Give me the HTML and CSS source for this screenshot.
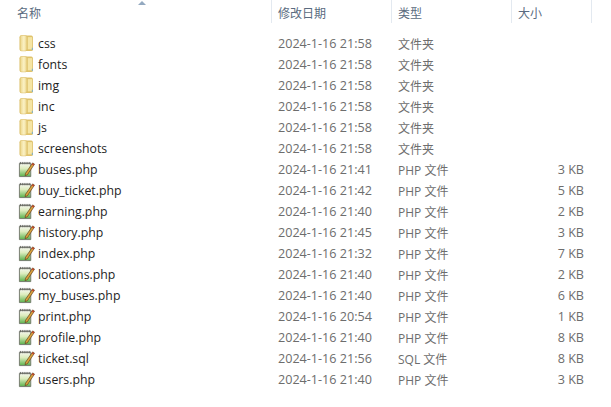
FILE: index.html
```html
<!DOCTYPE html>
<html lang="zh-CN">
<head>
  <meta charset="UTF-8" />
  <title>ticket</title>
  <link rel="stylesheet" href="styles.css">
</head>
<body>
  <svg class="defs" width="0" height="0">
    <defs>
      <linearGradient id="folderFill" x1="0" y1="0" x2="1" y2="0">
        <stop offset="0" stop-color="#ecd68a" />
        <stop offset="0.55" stop-color="#fbf2c6" />
        <stop offset="1" stop-color="#e8cf7e" />
      </linearGradient>
      <linearGradient id="pageFill" x1="0" y1="0" x2="0" y2="1">
        <stop offset="0" stop-color="#f6f7f0" />
        <stop offset="0.4" stop-color="#dcecbc" />
        <stop offset="1" stop-color="#58b04a" />
      </linearGradient>
      <symbol id="folder" viewBox="0 0 16 16">
        <path d="M3 0.500h9.500q1.500 0 1.500 1.500v12q0 1-1.500 1H3q-1.500 0-1.500-1.500V2q0-1.500 1.500-1.500z" fill="#dfc26a" />
        <path d="M2 1.500q0-1 1-1h4q1.500 0 1.500 1.500v11q0 2-1.500 2H3.500q-1.500 0-1.500-1.500z" fill="url(#folderFill)" stroke="#dcbf6c" stroke-width="0.5" />
        <path d="M9.200 2h4v11.500h-4z" fill="#f5e5a4" />
        <path d="M13 12h1v2h-1z" fill="#7fb0c8" />
      </symbol>
      <symbol id="script" viewBox="0 0 18 18">
        <path d="M1.500 2.500h12v14h-12z" fill="url(#pageFill)" stroke="#73786c" stroke-width="1" />
        <path d="M2.500 1v2.500M4.500 1v2.500M6.500 1v2.500M8.500 1v2.500M10.500 1v2.500M12.500 1v2.500" stroke="#5d5f58" stroke-width="1" />
        <path d="M8 13l7.500-11 2 1.300L10 14.500 7.500 15.500z" fill="#d9a23c" stroke="#5e3a1c" stroke-width="0.7" />
        <path d="M15.300 2.300l2 1.300-.8 1.200-2-1.300z" fill="#c23b2a" />
      </symbol>
    </defs>
  </svg>

  <div class="list-head">
    <div class="col col-name">名称<span class="sort-arrow"></span></div>
    <div class="col col-date">修改日期</div>
    <div class="col col-type">类型</div>
    <div class="col col-size">大小</div>
    <div class="col col-rest"></div>
  </div>

  <div class="file-list">
    <div class="file-row"><div class="file-name"><svg class="ico"><use href="#folder" /></svg>css</div><div class="file-date">2024-1-16 21:58</div><div class="file-type">文件夹</div><div class="file-size"></div></div>
    <div class="file-row"><div class="file-name"><svg class="ico"><use href="#folder" /></svg>fonts</div><div class="file-date">2024-1-16 21:58</div><div class="file-type">文件夹</div><div class="file-size"></div></div>
    <div class="file-row"><div class="file-name"><svg class="ico"><use href="#folder" /></svg>img</div><div class="file-date">2024-1-16 21:58</div><div class="file-type">文件夹</div><div class="file-size"></div></div>
    <div class="file-row"><div class="file-name"><svg class="ico"><use href="#folder" /></svg>inc</div><div class="file-date">2024-1-16 21:58</div><div class="file-type">文件夹</div><div class="file-size"></div></div>
    <div class="file-row"><div class="file-name"><svg class="ico"><use href="#folder" /></svg>js</div><div class="file-date">2024-1-16 21:58</div><div class="file-type">文件夹</div><div class="file-size"></div></div>
    <div class="file-row"><div class="file-name"><svg class="ico"><use href="#folder" /></svg>screenshots</div><div class="file-date">2024-1-16 21:58</div><div class="file-type">文件夹</div><div class="file-size"></div></div>
    <div class="file-row"><div class="file-name"><svg class="ico"><use href="#script" /></svg>buses.php</div><div class="file-date">2024-1-16 21:41</div><div class="file-type">PHP 文件</div><div class="file-size">3 KB</div></div>
    <div class="file-row"><div class="file-name"><svg class="ico"><use href="#script" /></svg>buy_ticket.php</div><div class="file-date">2024-1-16 21:42</div><div class="file-type">PHP 文件</div><div class="file-size">5 KB</div></div>
    <div class="file-row"><div class="file-name"><svg class="ico"><use href="#script" /></svg>earning.php</div><div class="file-date">2024-1-16 21:40</div><div class="file-type">PHP 文件</div><div class="file-size">2 KB</div></div>
    <div class="file-row"><div class="file-name"><svg class="ico"><use href="#script" /></svg>history.php</div><div class="file-date">2024-1-16 21:45</div><div class="file-type">PHP 文件</div><div class="file-size">3 KB</div></div>
    <div class="file-row"><div class="file-name"><svg class="ico"><use href="#script" /></svg>index.php</div><div class="file-date">2024-1-16 21:32</div><div class="file-type">PHP 文件</div><div class="file-size">7 KB</div></div>
    <div class="file-row"><div class="file-name"><svg class="ico"><use href="#script" /></svg>locations.php</div><div class="file-date">2024-1-16 21:40</div><div class="file-type">PHP 文件</div><div class="file-size">2 KB</div></div>
    <div class="file-row"><div class="file-name"><svg class="ico"><use href="#script" /></svg>my_buses.php</div><div class="file-date">2024-1-16 21:40</div><div class="file-type">PHP 文件</div><div class="file-size">6 KB</div></div>
    <div class="file-row"><div class="file-name"><svg class="ico"><use href="#script" /></svg>print.php</div><div class="file-date">2024-1-16 20:54</div><div class="file-type">PHP 文件</div><div class="file-size">1 KB</div></div>
    <div class="file-row"><div class="file-name"><svg class="ico"><use href="#script" /></svg>profile.php</div><div class="file-date">2024-1-16 21:40</div><div class="file-type">PHP 文件</div><div class="file-size">8 KB</div></div>
    <div class="file-row"><div class="file-name"><svg class="ico"><use href="#script" /></svg>ticket.sql</div><div class="file-date">2024-1-16 21:56</div><div class="file-type">SQL 文件</div><div class="file-size">8 KB</div></div>
    <div class="file-row"><div class="file-name"><svg class="ico"><use href="#script" /></svg>users.php</div><div class="file-date">2024-1-16 21:40</div><div class="file-type">PHP 文件</div><div class="file-size">3 KB</div></div>
  </div>
</body>
</html>
```

FILE: styles.css
```css
body {
  margin: 0;
  background: #fff;
  font-family: "Open Sans", "Noto Sans CJK SC", sans-serif;
  font-size: 12px;
  color: #6d6d6d;
  overflow: hidden;
}

.defs {
  display: block;
  height: 0;
}

.list-head {
  display: flex;
  height: 23px;
  color: #5a6b80;
}

.col {
  position: relative;
  box-sizing: border-box;
  padding-top: 4px;
  padding-left: 6px;
  border-right: 1px solid #e3e9f0;
}

.col-name {
  width: 272px;
  padding-left: 17px;
}

.col-date { width: 120px; }
.col-type { width: 120px; }
.col-size { width: 80px; }

.col-rest {
  flex: 1;
  border-right: none;
}

.sort-arrow {
  position: absolute;
  top: 1px;
  left: 138px;
  border-left: 4px solid transparent;
  border-right: 4px solid transparent;
  border-bottom: 4px solid #93a9c0;
}

.file-list {
  padding-top: 10px;
}

.file-row {
  display: flex;
  align-items: center;
  height: 21px;
}

.file-name {
  display: flex;
  align-items: center;
  width: 272px;
  padding-left: 18px;
  box-sizing: border-box;
  color: #1e1e1e;
  font-size: 12.3px;
}

.ico {
  width: 17px;
  height: 17px;
  margin-right: 3px;
  flex: none;
}

.file-date {
  width: 120px;
  padding-left: 6px;
  box-sizing: border-box;
  font-size: 12.6px;
}

.file-type {
  width: 120px;
  padding-left: 6px;
  box-sizing: border-box;
}

.file-size {
  width: 72px;
  text-align: right;
  font-size: 12.6px;
}
```
